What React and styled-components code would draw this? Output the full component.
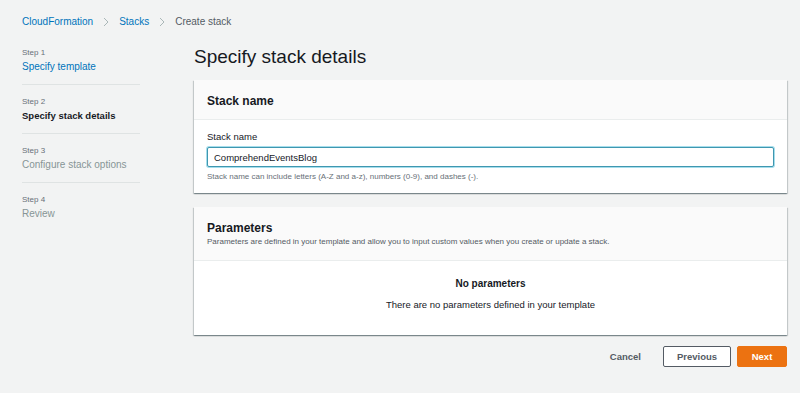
import React from "react";
import styled, { createGlobalStyle } from "styled-components";

const GlobalStyle = createGlobalStyle`
  body {
    margin: 0;
    background: #f2f3f3;
    font-family: "Liberation Sans", Arial, sans-serif;
    color: #16191f;
  }
`;

const Page = styled.div`
  padding: 15px 14px 0 22px;
  width: 800px;
  height: 393px;
  box-sizing: border-box;
`;

// Breadcrumbs
const Crumbs = styled.nav`
  display: flex;
  align-items: center;
  gap: 10px;
  height: 14px;
  font-size: 10px;
  line-height: 14px;
`;

const Crumb = styled.span`
  color: ${(p) => (p.current ? "#545b64" : "#0073bb")};
`;

const Chevron = () => (
  <svg width="6" height="10" viewBox="0 0 6 10">
    <path d="M1 1l4 4-4 4" fill="none" stroke="#aab7b8" strokeWidth="1" />
  </svg>
);

const Layout = styled.div`
  display: flex;
  gap: 54px;
  margin-top: 16px;
`;

// Left step navigation
const Steps = styled.ol`
  list-style: none;
  margin: 0;
  padding: 2px 0 0;
  width: 118px;
  flex-shrink: 0;
`;

const Step = styled.li`
  padding-bottom: 9px;
  margin-bottom: 11px;
  border-bottom: ${(p) => (p.last ? "none" : "1px solid #dfe3e3")};
`;

const StepLabel = styled.div`
  font-size: 8px;
  line-height: 12px;
  color: #687078;
`;

const StepTitle = styled.div`
  font-size: ${(p) => (p.state === "active" ? "9.5px" : "10px")};
  line-height: 16px;
  font-weight: ${(p) => (p.state === "active" ? "bold" : "normal")};
  color: ${(p) =>
    p.state === "active" ? "#16191f" : p.state === "done" ? "#0073bb" : "#879596"};
  white-space: nowrap;
`;

// Main content
const Main = styled.main`
  flex: 1;
  display: flex;
  flex-direction: column;
`;

const Title = styled.h1`
  margin: 0 0 11px;
  font-size: 19px;
  line-height: 24px;
  font-weight: normal;
  color: #16191f;
`;

const Card = styled.section`
  background: #fff;
  box-shadow: 0 1px 1px 0 rgba(0, 28, 36, 0.3), 1px 1px 1px 0 rgba(0, 28, 36, 0.15),
    -1px 1px 1px 0 rgba(0, 28, 36, 0.15);
  margin-bottom: ${(p) => p.gap || 0}px;
`;

const CardHeader = styled.header`
  background: #fafafa;
  border-bottom: 1px solid #eaeded;
  padding: 13px 13px ${(p) => p.pb || 10}px;
`;

const CardTitle = styled.h2`
  margin: 0;
  font-size: 12px;
  line-height: 16px;
  font-weight: bold;
`;

const CardDesc = styled.p`
  margin: 0;
  font-size: 8px;
  line-height: 12px;
  color: #545b64;
`;

const CardBody = styled.div`
  padding: ${(p) => p.pad};
  text-align: ${(p) => (p.center ? "center" : "left")};
`;

const Label = styled.label`
  display: block;
  font-size: 9.5px;
  line-height: 14px;
  margin-bottom: 3px;
`;

const Input = styled.input`
  display: block;
  box-sizing: border-box;
  width: 567px;
  height: 20px;
  padding: 0 6px;
  font-family: inherit;
  font-size: 9.5px;
  color: #16191f;
  border: 1px solid #3f97b0;
  border-radius: 2px;
  box-shadow: 0 0 0 1px rgba(0, 161, 201, 0.35);
  outline: none;
`;

const Hint = styled.div`
  margin-top: 4px;
  font-size: 8px;
  line-height: 11px;
  color: #687078;
`;

const EmptyTitle = styled.div`
  font-size: 10px;
  line-height: 14px;
  font-weight: bold;
`;

const EmptyText = styled.div`
  margin-top: 7px;
  font-size: 9.5px;
  line-height: 14px;
`;

// Footer actions
const Actions = styled.div`
  display: flex;
  justify-content: flex-end;
  align-items: center;
  gap: 6px;
  margin-top: 11px;
`;

const Button = styled.button`
  box-sizing: border-box;
  height: 21px;
  padding: 0 ${(p) => (p.variant === "link" ? "15px" : "12px")};
  font-family: inherit;
  font-size: 9.5px;
  font-weight: bold;
  border-radius: 2px;
  cursor: pointer;
  border: 1px solid
    ${(p) =>
      p.variant === "primary" ? "#ec7211" : p.variant === "normal" ? "#545b64" : "transparent"};
  background: ${(p) => (p.variant === "primary" ? "#ec7211" : p.variant === "normal" ? "#fff" : "transparent")};
  color: ${(p) => (p.variant === "primary" ? "#fff" : "#545b64")};
  min-width: ${(p) => p.w || 0}px;
`;

const steps = [
  { n: 1, title: "Specify template", state: "done" },
  { n: 2, title: "Specify stack details", state: "active" },
  { n: 3, title: "Configure stack options", state: "todo" },
  { n: 4, title: "Review", state: "todo" },
];

export default function App() {
  return (
    <>
      <GlobalStyle />
      <Page>
        <Crumbs>
          <Crumb>CloudFormation</Crumb>
          <Chevron />
          <Crumb>Stacks</Crumb>
          <Chevron />
          <Crumb current>Create stack</Crumb>
        </Crumbs>
        <Layout>
          <Steps>
            {steps.map((s, i) => (
              <Step key={s.n} last={i === steps.length - 1}>
                <StepLabel>Step {s.n}</StepLabel>
                <StepTitle state={s.state}>{s.title}</StepTitle>
              </Step>
            ))}
          </Steps>
          <Main>
            <Title>Specify stack details</Title>
            <Card gap={14}>
              <CardHeader>
                <CardTitle>Stack name</CardTitle>
              </CardHeader>
              <CardBody pad="10px 13px 11px">
                <Label htmlFor="stackName">Stack name</Label>
                <Input id="stackName" defaultValue="ComprehendEventsBlog" />
                <Hint>Stack name can include letters (A-Z and a-z), numbers (0-9), and dashes (-).</Hint>
              </CardBody>
            </Card>
            <Card>
              <CardHeader pb={12}>
                <CardTitle>Parameters</CardTitle>
                <CardDesc>
                  Parameters are defined in your template and allow you to input custom values when you
                  create or update a stack.
                </CardDesc>
              </CardHeader>
              <CardBody pad="16px 13px 23px" center>
                <EmptyTitle>No parameters</EmptyTitle>
                <EmptyText>There are no parameters defined in your template</EmptyText>
              </CardBody>
            </Card>
            <Actions>
              <Button variant="link">Cancel</Button>
              <Button variant="normal" w={68}>Previous</Button>
              <Button variant="primary" w={50}>Next</Button>
            </Actions>
          </Main>
        </Layout>
      </Page>
    </>
  );
}
